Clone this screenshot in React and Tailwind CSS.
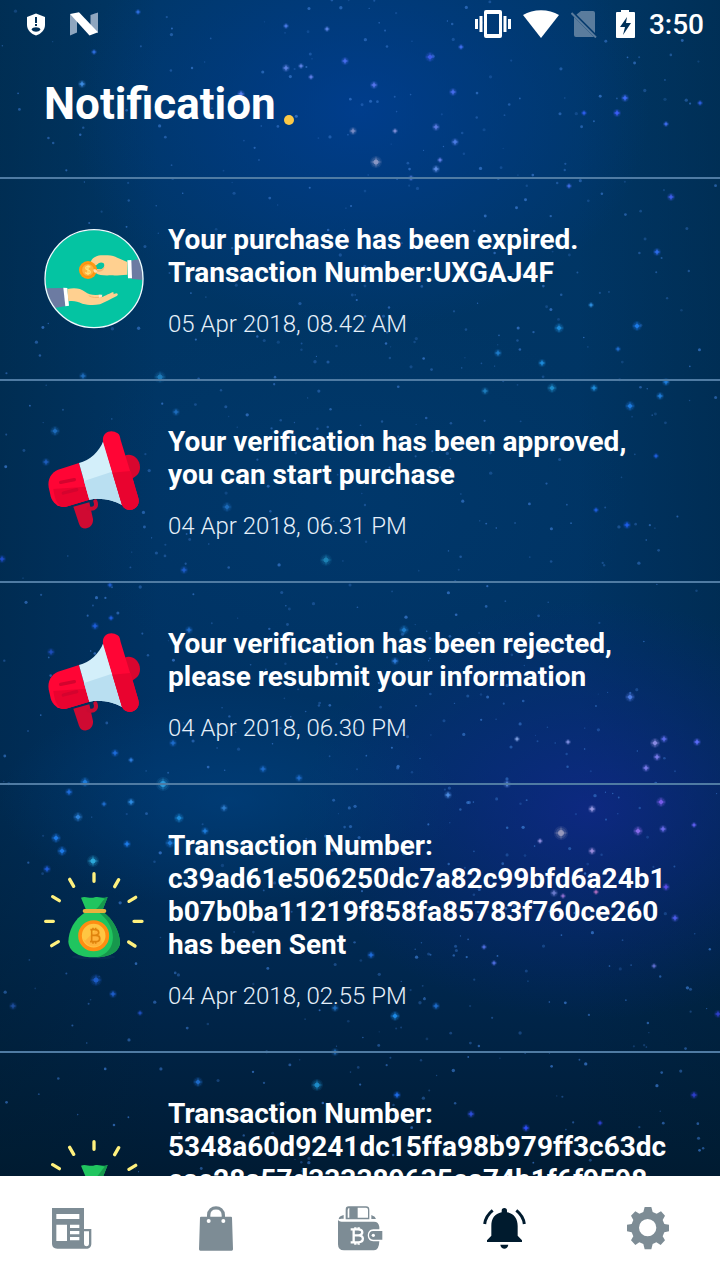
import { useState } from 'react';
import clsx from 'clsx';

const notifications = [
  {
    id: 1,
    type: 'purchase',
    lines: ['Your purchase has been expired.', 'Transaction Number:UXGAJ4F'],
    date: '05 Apr 2018, 08.42 AM',
  },
  {
    id: 2,
    type: 'announcement',
    lines: ['Your verification has been approved,', 'you can start purchase'],
    date: '04 Apr 2018, 06.31 PM',
  },
  {
    id: 3,
    type: 'announcement',
    lines: ['Your verification has been rejected,', 'please resubmit your information'],
    date: '04 Apr 2018, 06.30 PM',
  },
  {
    id: 4,
    type: 'sent',
    lines: [
      'Transaction Number:',
      'c39ad61e506250dc7a82c99bfd6a24b1',
      'b07b0ba11219f858fa85783f760ce260',
      'has been Sent',
    ],
    date: '04 Apr 2018, 02.55 PM',
  },
  {
    id: 5,
    type: 'sent',
    lines: [
      'Transaction Number:',
      '5348a60d9241dc15ffa98b979ff3c63dc',
      'eae28a57d333389635ea74b1f6f9598',
      'has been Sent',
    ],
    date: '04 Apr 2018, 02.50 PM',
  },
];

// x, y, radius, color
const brightStars = [
  [138, 12, 3, '#2f6fe0'], [94, 52, 3, '#2f6fe0'], [82, 84, 4, '#3f8fe8'], [286, 26, 3, '#4a7be8'],
  [327, 29, 3, '#5a86e8'], [345, 61, 4, '#4a6ff0'], [286, 68, 4, '#5f86e8'], [301, 66, 3, '#5f86e8'],
  [311, 77, 3, '#5f7fe8'], [241, 94, 4, '#5a7ff0'], [374, 85, 4, '#5a78f0'], [430, 57, 5, '#3f5ff0'],
  [461, 47, 3, '#3f6ff0'], [453, 92, 4, '#4a6ff0'], [376, 162, 6, '#8f9cc8'], [353, 131, 4, '#7f8fc8'],
  [395, 131, 3, '#7f8fd8'], [436, 127, 4, '#5f7fe8'], [455, 142, 4, '#4f7fe8'], [436, 169, 4, '#5f8fe8'],
  [440, 160, 3, '#5f7fe8'], [411, 178, 3, '#5f86e8'], [617, 113, 4, '#3f5fff'], [625, 98, 4, '#3f6fff'],
  [584, 113, 3, '#2f5ff0'], [666, 124, 3, '#3f6ff0'], [700, 103, 3, '#2f5fe0'], [671, 197, 4, '#3f5ff0'],
  [569, 186, 3, '#3f6fe8'], [657, 252, 4, '#2f6ff0'], [591, 305, 3, '#2f8fe0'], [559, 328, 5, '#1f8fdf'],
  [637, 326, 5, '#1f7fef'], [542, 363, 4, '#1f8fdf'], [498, 353, 4, '#1f7fcf'], [552, 388, 5, '#1f8fcf'],
  [594, 388, 4, '#1f8fdf'], [666, 382, 4, '#1f7fdf'], [660, 396, 4, '#1f7fdf'], [485, 391, 4, '#1f7fbf'],
  [618, 349, 3, '#1f6fcf'], [160, 377, 6, '#1f7fc0'], [83, 376, 4, '#1f6fbf'], [55, 431, 5, '#1f6fbf'],
  [176, 412, 4, '#1f6fbf'], [46, 462, 4, '#1f5fbf'], [227, 507, 5, '#1f6fbf'], [326, 560, 6, '#1f86b8'],
  [184, 570, 4, '#1f5fcf'], [110, 585, 3, '#1f5fcf'], [2, 559, 4, '#1f4fcf'], [95, 626, 4, '#1f5fdf'],
  [111, 618, 3, '#1f5fdf'], [51, 652, 4, '#1f4fbf'], [189, 630, 4, '#1f6fcf'], [630, 406, 5, '#1f7fe8'],
  [656, 456, 3, '#1f5fdf'], [627, 525, 4, '#1f5fef'], [596, 510, 3, '#1f5fdf'], [404, 630, 5, '#1f7fcf'],
  [395, 661, 4, '#2f7fdf'], [630, 697, 5, '#4f7fe8'], [655, 743, 5, '#8f8fe8'], [657, 757, 4, '#7f7ff0'],
  [646, 768, 4, '#7f7ff0'], [664, 739, 4, '#5f6ff0'], [697, 742, 4, '#5f6fff'], [517, 739, 3, '#7f9fe0'],
  [568, 742, 3, '#7f8fe0'], [507, 784, 4, '#5f8fe8'], [448, 795, 4, '#4f8fe8'], [592, 809, 4, '#9f9fe8'],
  [661, 802, 5, '#7f5ff0'], [561, 833, 7, '#9f9fc0'], [592, 851, 4, '#9f8fe0'], [638, 831, 5, '#8f6ff0'],
  [663, 829, 4, '#6f6ff0'], [694, 825, 3, '#5f5ff0'], [540, 841, 3, '#8f8fe0'], [666, 887, 4, '#5f4ff0'],
  [675, 918, 4, '#4f5ff0'], [554, 893, 4, '#6f7fd0'], [563, 896, 3, '#8f6fd0'], [596, 892, 3, '#af6fc0'],
  [85, 782, 5, '#1f7fdf'], [69, 792, 4, '#1f6fdf'], [163, 784, 7, '#2fa0e0'], [131, 802, 4, '#2f8fe8'],
  [78, 817, 5, '#2f86df'], [104, 804, 3, '#1f6fcf'], [56, 838, 5, '#1f7fef'], [62, 851, 5, '#1f7fef'],
  [127, 844, 4, '#1f7fef'], [179, 818, 5, '#1f8fdf'], [170, 843, 5, '#1f7fdf'], [93, 861, 6, '#2fb0e0'],
  [47, 869, 4, '#1f5fdf'], [205, 831, 4, '#1f7fdf'], [224, 808, 4, '#2f7fcf'], [173, 743, 4, '#1f6fcf'],
  [115, 753, 4, '#1f6fdf'], [131, 760, 3, '#2f7fdf'], [263, 769, 4, '#1f6fcf'], [299, 778, 4, '#1f6fcf'],
  [96, 980, 6, '#1f5fcf'], [113, 994, 4, '#1f5fcf'], [13, 1006, 4, '#1f4f9f'], [140, 1013, 3, '#1f4fbf'],
  [198, 1082, 5, '#1f6fcf'], [317, 1085, 6, '#1f8fcf'], [335, 1052, 4, '#1f6fbf'], [335, 1008, 4, '#1f6fbf'],
  [371, 955, 4, '#1f6fdf'], [395, 1016, 5, '#1f8fef'], [436, 1006, 4, '#1f6fcf'], [397, 1095, 4, '#1f6fef'],
  [471, 1114, 4, '#2f4fdf'], [526, 1128, 4, '#2f4fff'], [600, 1123, 3, '#2f3fcf'], [694, 1095, 4, '#2f3fcf'],
  [718, 1014, 4, '#2f3fcf'], [484, 947, 3, '#4f6fe0'], [494, 963, 3, '#4f6fe0'], [654, 966, 3, '#5f6fd0'],
];

// Small dust of stars, seeded so that it is the same on each render
const createDust = (count) => {
  let seed = 7;
  const next = () => {
    seed = (seed * 16807) % 2147483647;
    return seed / 2147483647;
  };
  return Array.from({ length: count }, () => {
    const y = next() * 1176;
    const center = y < 250 ? 370 : 330 + y * 0.12;
    const x = center + (next() + next() + next() - 1.5) * 480;
    return { x, y, r: 0.6 + next() * 1.1, o: 0.25 + next() * 0.5 };
  });
};

const dust = createDust(1000);

const StarryBackground = () => (
  <svg
    className="absolute inset-0 h-full w-full"
    viewBox="0 0 720 1280"
    preserveAspectRatio="xMidYMid slice"
    aria-hidden="true"
  >
    <defs>
      <linearGradient id="sky" x1="0" y1="0" x2="0" y2="1">
        <stop offset="0" stopColor="#003767" />
        <stop offset="0.3" stopColor="#003564" />
        <stop offset="0.6" stopColor="#003264" />
        <stop offset="0.76" stopColor="#00274e" />
        <stop offset="0.92" stopColor="#001b33" />
        <stop offset="1" stopColor="#001a30" />
      </linearGradient>
      <linearGradient id="edges" x1="0" y1="0" x2="1" y2="0">
        <stop offset="0" stopColor="#001c2c" stopOpacity="0.32" />
        <stop offset="0.22" stopColor="#001c2c" stopOpacity="0" />
        <stop offset="0.8" stopColor="#001c2c" stopOpacity="0" />
        <stop offset="1" stopColor="#001c2c" stopOpacity="0.28" />
      </linearGradient>
      <radialGradient id="blueGlow">
        <stop offset="0" stopColor="#00409c" stopOpacity="0.7" />
        <stop offset="1" stopColor="#00409c" stopOpacity="0" />
      </radialGradient>
      <radialGradient id="purpleGlow">
        <stop offset="0" stopColor="#12268c" stopOpacity="0.75" />
        <stop offset="1" stopColor="#0a2480" stopOpacity="0" />
      </radialGradient>
      <radialGradient id="softGlow">
        <stop offset="0" stopColor="#004484" stopOpacity="0.55" />
        <stop offset="1" stopColor="#004484" stopOpacity="0" />
      </radialGradient>
    </defs>
    <rect width="720" height="1280" fill="url(#sky)" />
    <rect width="720" height="1280" fill="url(#edges)" />
    <ellipse cx="360" cy="110" rx="290" ry="220" fill="url(#blueGlow)" />
    <ellipse cx="590" cy="810" rx="290" ry="210" fill="url(#purpleGlow)" />
    <ellipse cx="230" cy="800" rx="230" ry="110" fill="url(#softGlow)" />
    <ellipse cx="350" cy="500" rx="280" ry="200" fill="url(#softGlow)" opacity="0.4" />
    <g fill="#3a7ad0">
      {dust.map((star, i) => (
        <circle key={i} cx={star.x} cy={star.y} r={star.r} opacity={star.o} />
      ))}
    </g>
    {brightStars.map(([x, y, r, color]) => (
      <g key={`${x}-${y}`} fill={color}>
        <circle cx={x} cy={y} r={r} opacity="0.12" />
        <circle cx={x} cy={y} r={r * 0.75} opacity="0.2" />
        <path
          d={`M${x} ${y - r}L${x + 1} ${y - 1}L${x + r} ${y}L${x + 1} ${y + 1}L${x} ${y + r}L${x - 1} ${y + 1}L${x - r} ${y}L${x - 1} ${y - 1}Z`}
          opacity="0.5"
        />
        <circle cx={x} cy={y} r={r * 0.42} opacity="0.85" />
      </g>
    ))}
  </svg>
);

const StatusBar = () => (
  <div className="flex h-12 items-center justify-between pl-6 pr-4 text-white">
    <div className="flex items-center gap-5">
      <svg className="h-7 w-6" viewBox="0 0 24 28" aria-hidden="true">
        <path d="M12 3.500 L21 7 V15 C21 20 17 24 12 25.500 C7 24 3 20 3 15 V7 Z" fill="white" />
        <path d="M11 7h2v6h-2zM11 14h2v2h-2z" fill="#003058" />
        <path d="M7.500 19.500c1-3 8-3 9 0c-2 3-7 3-9 0Z" fill="#003058" />
      </svg>
      <svg className="h-7 w-8" viewBox="0 0 32 28" aria-hidden="true">
        <path d="M2 4 L9 8 V22.500 L2 25.500Z M22.500 5 L30 2.500 V23 L22.500 18Z" fill="#8fa6bf" />
        <path d="M2 4 L11 2.300 L30 22.300 L21.500 25.400Z" fill="white" />
      </svg>
    </div>
    <div className="flex items-center gap-3">
      <svg className="h-7 w-9" viewBox="0 0 36 28" fill="white" aria-hidden="true">
        <path d="M11 0h14a2 2 0 0 1 2 2v24a2 2 0 0 1-2 2H11a2 2 0 0 1-2-2V2a2 2 0 0 1 2-2ZM12 4v20h12V4Z" fillRule="evenodd" />
        <path d="M0 9h3v10H0zM4.500 6h3v16h-3zM28.500 6h3v16h-3zM33 9h3v10h-3z" />
      </svg>
      <svg className="h-7 w-9" viewBox="0 0 36 28" fill="white" aria-hidden="true">
        <path d="M18 28 L0 5 C10-1.500 26-1.500 36 5Z" />
      </svg>
      <svg className="h-7 w-[30px]" viewBox="1 0 30 28" aria-hidden="true">
        <path d="M11 1h12a2 2 0 0 1 2 2v20L6.500 4.500ZM4 7l20 20H6a2 2 0 0 1-2-2Z" fill="#5a7c9d" />
        <path d="M1.500 3 L26 27.500" stroke="#5a7c9d" strokeWidth="2" />
      </svg>
      <svg className="h-7 w-6" viewBox="0 0 24 28" aria-hidden="true">
        <path d="M8 -1h8v3h5a1 1 0 0 1 1 1v24a1 1 0 0 1-1 1H4a1 1 0 0 1-1-1V3a1 1 0 0 1 1-1h4Z" fill="white" />
        <path d="M14 7 L7 17h5l-2 8 8-12h-5Z" fill="#003058" />
      </svg>
      <span className="text-[28px]/[33px] font-medium">3:50</span>
    </div>
  </div>
);

const PurchaseIcon = () => (
  <svg className="size-25 shrink-0" viewBox="42 42 300 300" aria-hidden="true">
    <defs>
      <clipPath id="badge">
        <circle cx="192" cy="191" r="146" />
      </clipPath>
    </defs>
    <circle cx="192" cy="191" r="146" fill="#04c4a2" />
    <g clipPath="url(#badge)">
      <path d="M303 137 L345 128 V196 L303 191Z" fill="#6c7ba2" />
      <path d="M292 136 L304 135 L306 190 L294 190Z" fill="white" />
      <path d="M182 140 C190 124 205 120 222 121 C242 119 252 122 262 128 L292 141 V179 C270 180 262 182 244 181 C222 182 208 181 197 174 C190 170 192 162 200 162 L213 163 C222 160 226 150 220 144 C212 140 205 144 199 151 L190 152Z" fill="#ffd090" />
      <path d="M197 164 C208 166 221 163 224 152 C224 170 205 173 197 169Z" fill="#f5b573" />
      <circle cx="174" cy="165" r="27" fill="#ff9811" />
      <circle cx="174" cy="165" r="19" fill="#ffb23e" stroke="#f08a10" strokeWidth="2" />
      <path d="M181 157 C177 152 167 153 167 159 C167 166 181 163 181 171 C181 177 170 178 166 172 M174 151 V180" fill="none" stroke="#ffe27a" strokeWidth="4" />
      <path d="M190 164 C197 160 202 166 202 171 C198 176 190 173 190 164Z" fill="#ffe0b0" />
      <path d="M40 220 L103 219 L107 273 L62 281Z" fill="#6c7ba2" />
      <path d="M100 218 L112 219 L117 272 L106 274Z" fill="white" />
      <path d="M112 222 C132 217 151 219 165 230 C174 237 184 239 196 240 L211 239 C219 240 219 247 210 249 C226 241 232 239 244 233 C251 230 254 234 249 238 L259 235 C266 236 264 242 259 244 C244 251 224 263 210 268 C188 272 174 270 157 266 C142 259 131 257 115 259Z" fill="#ffd090" />
      <path d="M176 242 C187 248 200 250 216 245" fill="none" stroke="#f5b573" strokeWidth="3" />
      <path d="M206 239 L217 239 L215 246 L207 248Z" fill="#ffe8d2" />
    </g>
    <circle cx="192" cy="191" r="147" fill="none" stroke="#eefcff" strokeWidth="4" />
  </svg>
);

const MegaphoneIcon = () => (
  <svg className="size-25 shrink-0" viewBox="42 33 300 300" aria-hidden="true">
    <path d="M130 260 L178 247 L189 297 C192 326 155 337 147 311Z" fill="#cf0a32" />
    <path d="M176 265 C194 270 202 258 196 244" fill="none" stroke="#c80b32" strokeWidth="12" strokeLinecap="round" />
    <path d="M284 107 C304 99 324 112 329 133 C334 157 320 170 305 176Z" fill="#d8062f" />
    <path d="M147 129 L178 239 L108 260 C86 265 68 250 62 229 L56 202 C52 177 64 158 84 149Z" fill="#ff0535" />
    <path d="M70 207 L168 200 L178 239 L108 260 C88 264 76 250 70 207Z" fill="#e9032f" />
    <path d="M92 187 L133 179 M100 219 L140 209" stroke="#d4032e" strokeWidth="10" strokeLinecap="round" />
    <path d="M147 129 C179 121 209 94 220 62 L276 255 C252 241 211 231 178 239Z" fill="#d3effa" />
    <path d="M162 183 L246 155 L276 255 C252 241 211 231 178 239Z" fill="#b9dff1" />
    <path d="M219 65 C215 38 242 25 263 40 C270 45 270 52 272 60 L325 234 C334 268 290 283 276 255Z" fill="#ff0535" />
    <path d="M247 158 L302 153 L325 234 C334 268 290 283 276 255Z" fill="#e9032f" />
  </svg>
);

const MoneyBagIcon = () => (
  <svg className="size-25 shrink-0" viewBox="42 24 300 300" aria-hidden="true">
    <path
      d="M192 41 V64 M119 58 L131 79 M266 59 L254 80 M68 110 L88 122 M317 112 L297 124 M47 184 H70 M312 184 H336 M65 257 L85 245 M296 246 L315 258"
      stroke="#fff17e"
      strokeWidth="10"
      strokeLinecap="round"
    />
    <ellipse cx="191" cy="291" rx="65" ry="7" fill="#0c3157" opacity="0.6" />
    <path d="M168 155 C130 179 116 213 115 245 C118 281 155 292 193 292 C237 292 270 276 270 245 C267 213 250 177 218 155Z" fill="#20c55f" />
    <path d="M218 155 C250 177 267 213 270 245 C270 275 240 290 200 292 C267 274 262 196 204 155Z" fill="#17984d" />
    <path d="M153 113 C167 107 179 117 194 112 C206 107 222 118 233 111 L218 149 H168Z" fill="#20c55f" />
    <path d="M213 113 C223 116 228 114 233 111 L218 149 H196 C208 141 211 130 224 117Z" fill="#17984d" />
    <path d="M164 153 H223" stroke="#e8b13d" strokeWidth="12" strokeLinecap="round" />
    <circle cx="191" cy="227" r="41" fill="#ffc642" stroke="#ff8d12" strokeWidth="11" />
    <path d="M160 236 A34 34 0 0 0 216 250 L204 203 L165 242Z" fill="#ffb23a" />
    <path
      d="M181 209 H194 C210 209 210 226 195 226 H185 H197 C213 226 213 245 197 245 H180 M185 209 V245 M189 203 V209 M197 203 V209 M189 245 V251 M197 245 V251"
      fill="none"
      stroke="#df830c"
      strokeWidth="5"
    />
  </svg>
);

const typeIcons = {
  purchase: PurchaseIcon,
  announcement: MegaphoneIcon,
  sent: MoneyBagIcon,
};

const NotificationItem = ({ item }) => {
  const Icon = typeIcons[item.type];

  return (
    <li className="flex items-center gap-6 border-t-2 border-[#4f7ba3] px-11 pt-11 pb-[41px]">
      <div className="flex pb-[3px]">
        <Icon />
      </div>
      <div className="min-w-0 flex-1 whitespace-nowrap">
        <h2 className="text-[28px]/[33px] font-bold text-white">
          {item.lines.map((line) => (
            <span key={line} className="block">{line}</span>
          ))}
        </h2>
        <p className="mt-[21px] text-2xl/7 font-light text-[#e6f0fa]">{item.date}</p>
      </div>
    </li>
  );
};

const NewsIcon = () => (
  <svg className="size-12" viewBox="144 342 144 144" fill="currentColor" aria-hidden="true">
    <path fillRule="evenodd" d="M156 354 H252 V417 H274 V461 C274 470 268 476 259 476 H172 C161 476 156 470 156 460Z M169 372 V387 H238 V372Z M169 404 V453 H201 V404Z M210 404 V414 H238 V404Z M210 423 V433 H238 V423Z M210 441 V451 H238 V441Z M252 424 V461 C252 471 267 471 267 461 V424Z" />
  </svg>
);

const BagIcon = () => (
  <svg className="size-12" viewBox="576 342 144 144" fill="currentColor" aria-hidden="true">
    <path d="M626 394 V376 C626 346 670 346 670 376 V394" fill="none" stroke="currentColor" strokeWidth="10" />
    <path fillRule="evenodd" d="M603 380 H693 Q696 380 696 383 L699 478 Q699 482 695 482 H601 Q597 482 597 478 L600 383 Q600 380 603 380Z" />
    <circle cx="626" cy="393" r="6" fill="white" />
    <circle cx="670" cy="393" r="6" fill="white" />
  </svg>
);

const WalletIcon = () => (
  <svg className="size-12" viewBox="18 27 144 144" fill="currentColor" aria-hidden="true">
    <path d="M26 73 C26 66 32 62 41 60 V71 H34Z M124 60 L134 65 L138 72 H124Z" />
    <path fillRule="evenodd" d="M56 34 H108 Q118 34 118 44 V73 H47 V44 Q47 34 56 34Z M58 39 Q53 39 53 46 V68 H58Z M83 38 V68 H114 V44 Q114 38 108 38Z" />
    <path d="M24 75 C28 80 33 80 40 80 H132 Q146 80 148 96 V103 H130 C108 103 108 139 130 139 H148 Q147 166 132 166 H42 Q24 166 24 148Z" />
    <path d="M129 108 H157 V134 H129 C113 134 113 108 129 108Z" />
    <path d="M62 103 H84 C101 103 101 121 85 121 H73 H86 C103 121 103 142 85 142 H62 M71 103 V142 M76 97 V104 M86 97 V104 M76 141 V149 M86 141 V149" fill="none" stroke="white" strokeWidth="7" />
    <circle cx="130" cy="121" r="5" fill="white" />
  </svg>
);

const BellIcon = () => (
  <svg className="size-12" viewBox="360 342 144 144" fill="currentColor" aria-hidden="true">
    <path d="M425 367 V362 A8 8 0 0 1 441 362 V367 C462 371 473 386 473 408 V437 L486 451 V456 H381 V451 L394 437 V408 C394 386 404 371 425 367Z" />
    <path d="M421 464 H445 C443 480 423 480 421 464Z" />
    <path d="M398 361 C383 373 376 385 374 402 M469 361 C484 373 491 385 493 402" fill="none" stroke="currentColor" strokeWidth="9" />
  </svg>
);

const GearIcon = () => (
  <svg className="size-12" viewBox="792 342 144 144" fill="currentColor" aria-hidden="true">
    <path fillRule="evenodd" d="M854 351 H874 L878 366 L890 371 L903 364 L915 377 L908 390 L913 402 L927 404 V424 L913 427 L908 439 L915 451 L902 465 L889 457 L878 462 L874 478 H854 L850 462 L838 457 L826 465 L813 451 L820 439 L815 427 L801 424 V404 L815 402 L820 390 L813 377 L826 364 L838 371 L850 366Z M863 387 A26 26 0 1 0 863 439 A26 26 0 1 0 863 387Z" />
  </svg>
);

const tabs = [
  { id: 'news', label: 'News', icon: NewsIcon },
  { id: 'shop', label: 'Shop', icon: BagIcon },
  { id: 'wallet', label: 'Wallet', icon: WalletIcon },
  { id: 'notification', label: 'Notification', icon: BellIcon },
  { id: 'settings', label: 'Settings', icon: GearIcon },
];

const App = () => {
  const [activeTab, setActiveTab] = useState('notification');

  return (
    <div className="relative flex h-screen flex-col overflow-hidden bg-[#00284e] font-[Roboto,sans-serif]">
      <StarryBackground />

      <div className="relative flex min-h-0 flex-1 flex-col">
        <StatusBar />

        {/* Page title */}
        <header className="flex items-end gap-2 px-11 pt-[30px] pb-[47px]">
          <h1 className="text-[44px]/[52px] font-bold text-white">Notification</h1>
          <span className="mb-[5px] size-2.5 rounded-full bg-[#fbc947]" />
        </header>

        <ul className="min-h-0 flex-1 overflow-y-auto [scrollbar-width:none]">
          {notifications.map((item) => (
            <NotificationItem key={item.id} item={item} />
          ))}
        </ul>
      </div>

      {/* Bottom navigation */}
      <nav className="relative flex h-[104px] shrink-0 bg-white">
        {tabs.map(({ id, label, icon: Icon }) => (
          <button
            key={id}
            type="button"
            aria-label={label}
            onClick={() => setActiveTab(id)}
            className={clsx(
              'flex flex-1 items-center justify-center',
              activeTab === id ? 'text-[#001b2e]' : 'text-[#7d8c95]'
            )}
          >
            <Icon />
          </button>
        ))}
      </nav>
    </div>
  );
};

export default App;
